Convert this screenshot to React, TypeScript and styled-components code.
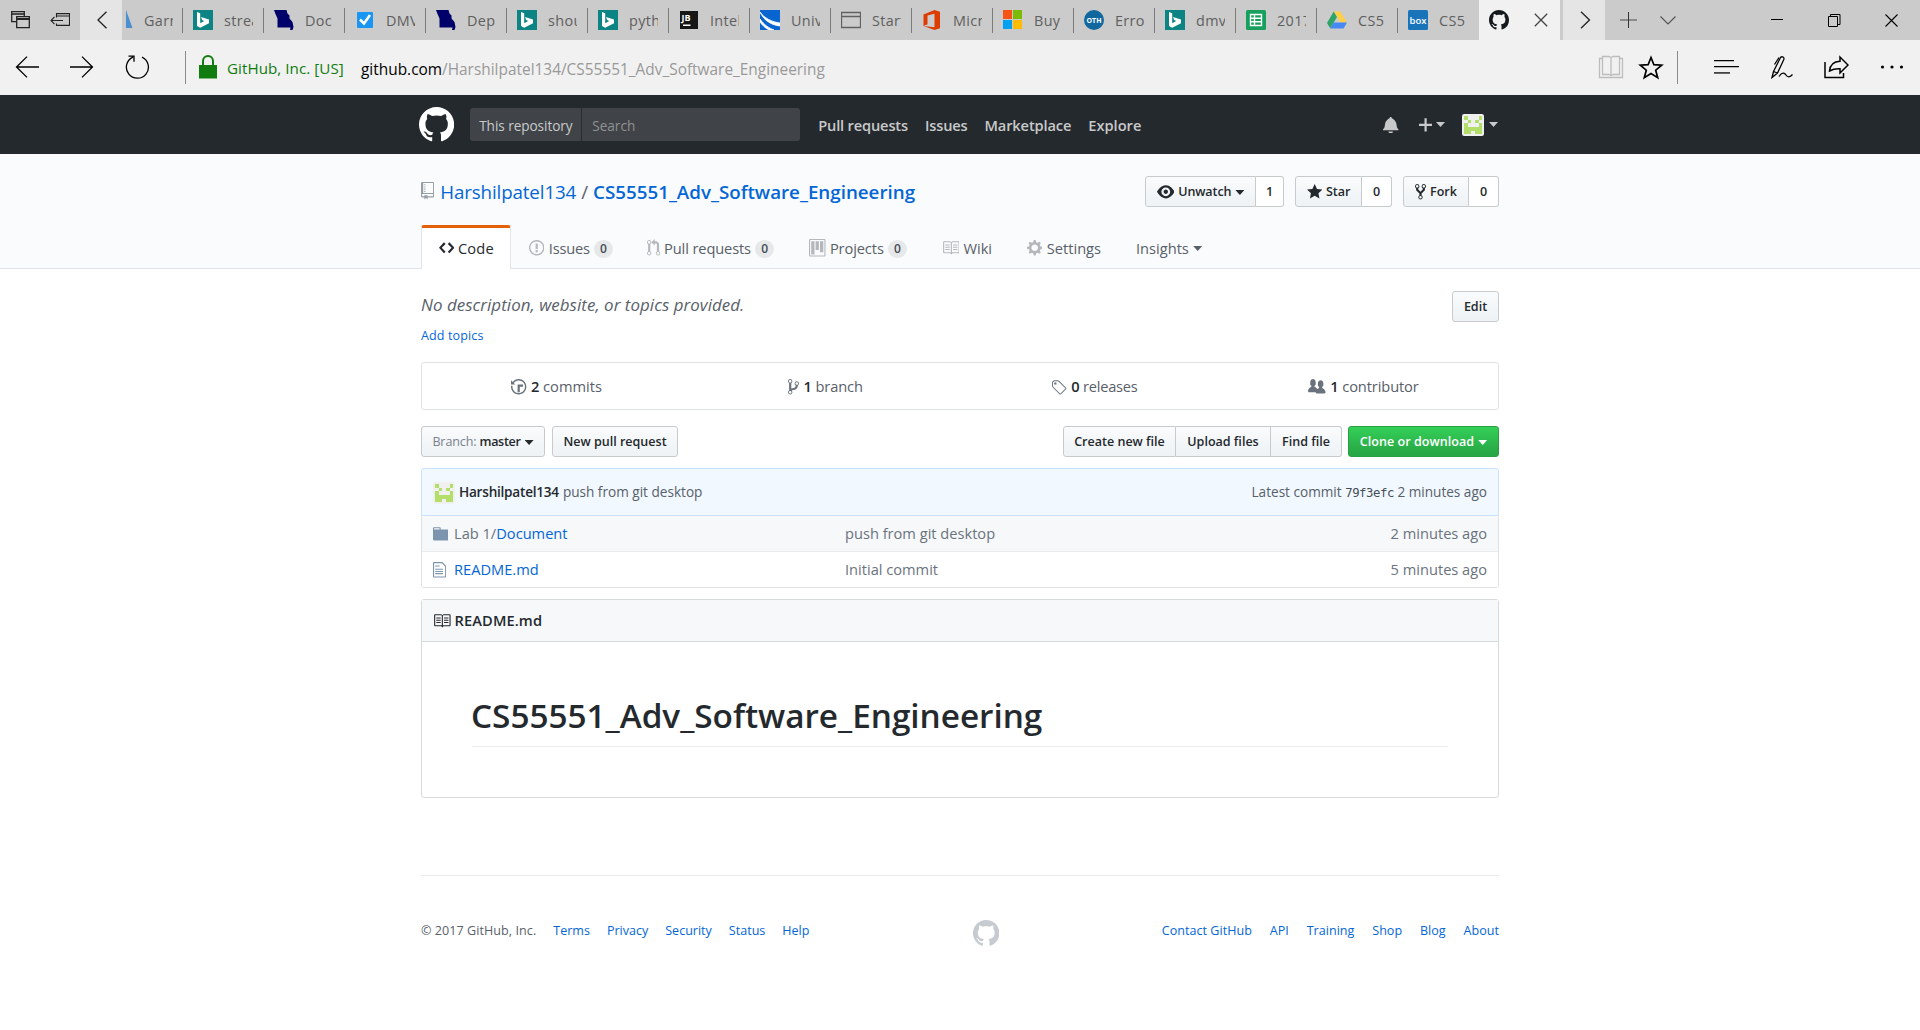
import React from "react";
import styled, { createGlobalStyle, css } from "styled-components";

const Global = createGlobalStyle`
  * { box-sizing: border-box; }
  html, body { margin: 0; background: #fff; }
  body {
    font-family: "Open Sans", "Noto Sans", sans-serif;
    color: #24292e;
    font-size: 14.63px;
    line-height: 1.5;
    overflow: hidden;
  }
  svg { display: block; flex: none; }
`;

/* ---------- Octicon paths: [viewBox width, path] ---------- */
const icons = {
  mark: [16, "M8 0C3.58 0 0 3.58 0 8c0 3.54 2.29 6.53 5.47 7.59.4.07.55-.17.55-.38 0-.19-.01-.82-.01-1.49-2.01.37-2.53-.49-2.69-.94-.09-.23-.48-.94-.82-1.13-.28-.15-.68-.52-.01-.53.63-.01 1.08.58 1.23.82.72 1.21 1.87.87 2.33.66.07-.52.28-.87.51-1.07-1.78-.2-3.64-.89-3.64-3.95 0-.87.31-1.59.82-2.15-.08-.2-.36-1.02.08-2.12 0 0 .67-.21 2.2.82.64-.18 1.32-.27 2-.27.68 0 1.36.09 2 .27 1.53-1.04 2.2-.82 2.2-.82.44 1.1.16 1.92.08 2.12.51.56.82 1.27.82 2.15 0 3.07-1.87 3.75-3.65 3.95.29.25.54.73.54 1.48 0 1.07-.01 1.93-.01 2.2 0 .21.15.46.55.38A8.013 8.013 0 0 0 16 8c0-4.42-3.58-8-8-8z"],
  repo: [12, "M4 9H3V8h1v1zm0-3H3v1h1V6zm0-2H3v1h1V4zm0-2H3v1h1V2zm8-1v12c0 .55-.45 1-1 1H6v2l-1.5-1.5L3 16v-2H1c-.55 0-1-.45-1-1V1c0-.55.45-1 1-1h10c.55 0 1 .45 1 1zm-1 10H1v2h2v-1h3v1h5v-2zm0-10H2v9h9V1z"],
  code: [14, "M9.5 3L8 4.5 11.5 8 8 11.5 9.5 13 14 8 9.5 3zm-5 0L0 8l4.5 5L6 11.5 2.5 8 6 4.5 4.5 3z"],
  issue: [14, "M7 2.3c3.14 0 5.7 2.56 5.7 5.7s-2.56 5.7-5.7 5.7A5.71 5.71 0 0 1 1.3 8c0-3.14 2.56-5.7 5.7-5.7zM7 1C3.14 1 0 4.14 0 8s3.14 7 7 7 7-3.14 7-7-3.14-7-7-7zm1 3H6v5h2V4zm0 6H6v2h2v-2z"],
  pull: [12, "M11 11.28V5c-.03-.78-.34-1.47-.94-2.06C9.46 2.35 8.78 2.03 8 2H7V0L4 3l3 3V4h1c.27.02.48.11.69.31.21.2.3.42.31.69v6.28A1.993 1.993 0 0 0 10 15a1.993 1.993 0 0 0 1-3.72zm-1 2.92c-.66 0-1.2-.55-1.2-1.2 0-.65.55-1.2 1.2-1.2.65 0 1.2.55 1.2 1.2 0 .65-.55 1.2-1.2 1.2zM4 3c0-1.11-.89-2-2-2a1.993 1.993 0 0 0-1 3.72v6.56A1.993 1.993 0 0 0 2 15a1.993 1.993 0 0 0 1-3.72V4.72c.59-.34 1-.98 1-1.72zm-.8 10c0 .66-.55 1.2-1.2 1.2-.65 0-1.2-.55-1.2-1.2 0-.65.55-1.2 1.2-1.2.65 0 1.2.55 1.2 1.2zM2 4.2C1.34 4.2.8 3.65.8 3c0-.65.55-1.2 1.2-1.2.65 0 1.2.55 1.2 1.2 0 .65-.55 1.2-1.2 1.2z"],
  project: [15, "M10 12h3V2h-3v10zm-4-2h3V2H6v8zm-4 4h3V2H2v12zm-1 1h13V1H1v14zM14 0H1a1 1 0 0 0-1 1v14a1 1 0 0 0 1 1h13a1 1 0 0 0 1-1V1a1 1 0 0 0-1-1z"],
  book: [16, "M3 5h4v1H3V5zm0 3h4V7H3v1zm0 2h4V9H3v1zm11-5h-4v1h4V5zm0 2h-4v1h4V7zm0 2h-4v1h4V9zm2-6v9c0 .55-.45 1-1 1H9.5l-1 1-1-1H2c-.55 0-1-.45-1-1V3c0-.55.45-1 1-1h5.5l1 1 1-1H15c.55 0 1 .45 1 1zm-8 .5L7.5 3H2v9h6V3.5zm7-.5H9.5l-.5.5V12h6V3z"],
  gear: [14, "M14 8.77v-1.6l-1.94-.64-.45-1.09.88-1.84-1.13-1.13-1.81.91-1.09-.45-.69-1.92h-1.6l-.63 1.94-1.11.45-1.84-.88-1.13 1.13.91 1.81-.45 1.09L0 7.23v1.59l1.94.64.45 1.09-.88 1.84 1.13 1.13 1.81-.91 1.09.45.69 1.92h1.59l.63-1.94 1.11-.45 1.84.88 1.13-1.13-.92-1.81.47-1.09L14 8.75v.02zM7 11c-1.66 0-3-1.34-3-3s1.34-3 3-3 3 1.34 3 3-1.34 3-3 3z"],
  eye: [16, "M8.06 2C3 2 0 8 0 8s3 6 8.06 6C13 14 16 8 16 8s-3-6-7.94-6zM8 12c-2.2 0-4-1.78-4-4 0-2.2 1.8-4 4-4 2.22 0 4 1.8 4 4 0 2.22-1.78 4-4 4zm2-4c0 1.11-.89 2-2 2-1.11 0-2-.89-2-2 0-1.11.89-2 2-2 1.11 0 2 .89 2 2z"],
  star: [14, "M14 6l-4.9-.64L7 1 4.9 5.36 0 6l3.6 3.26L2.67 14 7 11.67 11.33 14l-.93-4.74L14 6z"],
  fork: [10, "M8 1a1.993 1.993 0 0 0-1 3.72V6L5 8 3 6V4.72A1.993 1.993 0 0 0 2 1a1.993 1.993 0 0 0-1 3.72V6.5l3 3v1.78A1.993 1.993 0 0 0 5 15a1.993 1.993 0 0 0 1-3.72V9.5l3-3V4.72A1.993 1.993 0 0 0 8 1zM2 4.2C1.34 4.2.8 3.65.8 3c0-.65.55-1.2 1.2-1.2.65 0 1.2.55 1.2 1.2 0 .65-.55 1.2-1.2 1.2zm3 10c-.66 0-1.2-.55-1.2-1.2 0-.65.55-1.2 1.2-1.2.65 0 1.2.55 1.2 1.2 0 .65-.55 1.2-1.2 1.2zm3-10c-.66 0-1.2-.55-1.2-1.2 0-.65.55-1.2 1.2-1.2.65 0 1.2.55 1.2 1.2 0 .65-.55 1.2-1.2 1.2z"],
  history: [14, "M8 13H6V6h5v2H8v5zM7 1C4.81 1 2.87 2.02 1.59 3.59L0 2v4h4L2.5 4.5C3.55 3.17 5.17 2.3 7 2.3c3.14 0 5.7 2.56 5.7 5.7s-2.56 5.7-5.7 5.7A5.71 5.71 0 0 1 1.3 8c0-.34.03-.67.09-1H.08C.03 7.33 0 7.66 0 8c0 3.86 3.14 7 7 7s7-3.14 7-7-3.14-7-7-7z"],
  branch: [10, "M10 5c0-1.11-.89-2-2-2a1.993 1.993 0 0 0-1 3.72v.3c-.02.52-.23.98-.63 1.38-.4.4-.86.61-1.38.63-.83.02-1.48.16-2 .45V4.72a1.993 1.993 0 0 0-1-3.72C.88 1 0 1.89 0 3a2 2 0 0 0 1 1.72v6.56c-.59.35-1 .99-1 1.72 0 1.11.89 2 2 2 1.11 0 2-.89 2-2 0-.53-.2-1-.53-1.36.09-.06.48-.41.59-.47.25-.11.56-.17.94-.17 1.05-.05 1.95-.45 2.75-1.25S8.95 7.77 9 6.73h-.02C9.59 6.37 10 5.73 10 5zM2 1.8c.66 0 1.2.55 1.2 1.2 0 .65-.55 1.2-1.2 1.2C1.35 4.2.8 3.65.8 3c0-.65.55-1.2 1.2-1.2zm0 12.41c-.66 0-1.2-.55-1.2-1.2 0-.65.55-1.2 1.2-1.2.65 0 1.2.55 1.2 1.2 0 .65-.55 1.2-1.2 1.2zm6-8c-.66 0-1.2-.55-1.2-1.2 0-.65.55-1.2 1.2-1.2.65 0 1.2.55 1.2 1.2 0 .65-.55 1.2-1.2 1.2z"],
  tag: [14, "M6.73 2.73C6.26 2.26 5.62 2 4.96 2H2.5C1.13 2 0 3.13 0 4.5v2.47c0 .66.27 1.3.73 1.77l6.06 6.06c.39.39 1.02.39 1.41 0l4.59-4.59a.996.996 0 0 0 0-1.41L6.73 2.73zM1.38 8.09c-.31-.3-.47-.7-.47-1.13V4.5c0-.88.72-1.59 1.59-1.59h2.47c.42 0 .83.16 1.13.47l6.14 6.13-4.73 4.73-6.13-6.15zM2.01 4h2v2H2V4h.01z"],
  people: [16, "M16 12.999c0 .439-.45 1-1 1H7.995c-.539 0-.994-.447-.995-.999H1c-.54 0-1-.561-1-1 0-2.634 3-4 3-4s.229-.409 0-1c-.841-.621-1.058-.59-1-3 .058-2.419 1.367-3 2.5-3s2.442.58 2.5 3c.058 2.41-.159 2.379-1 3-.229.59 0 1 0 1s1.549.711 2.42 2.088C9.196 9.369 10 8.999 10 8.999s.229-.409 0-1c-.841-.62-1.058-.59-1-2.999.058-2.419 1.367-3 2.5-3s2.437.581 2.495 3c.059 2.41-.158 2.38-1 3-.229.59 0 1 0 1s3.005 1.366 3.005 4"],
  folder: [14, "M13 4H7V3c0-.66-.31-1-1-1H1c-.55 0-1 .45-1 1v10c0 .55.45 1 1 1h12c.55 0 1-.45 1-1V5c0-.55-.45-1-1-1zM6 4H1V3h5v1z"],
  file: [12, "M6 5H2V4h4v1zM2 8h7V7H2v1zm0 2h7V9H2v1zm0 2h7v-1H2v1zm10-7.5V14c0 .55-.45 1-1 1H1c-.55 0-1-.45-1-1V2c0-.55.45-1 1-1h7.5L12 4.5zM11 5L8 2H1v12h10V5z"],
  bell: [14, "M14 12v1H0v-1l.73-.58c.77-.77.81-2.55 1.19-4.42C2.69 3.23 6 2 6 2c0-.55.45-1 1-1s1 .45 1 1c0 0 3.39 1.23 4.16 5 .38 1.88.42 3.66 1.19 4.42l.66.58H14zm-7 4c1.11 0 2-.89 2-2H5c0 1.11.89 2 2 2z"],
  plus: [12, "M12 9H7v5H5V9H0V7h5V2h2v5h5z"],
} as const;

function Octicon({ name, size = 17.6 }: { name: keyof typeof icons; size?: number }) {
  const [w, d] = icons[name];
  return (
    <svg width={(w * size) / 16} height={size} viewBox={`0 0 ${w} 16`} fill="currentColor">
      <path d={d} fillRule={name === "project" ? "evenodd" : "nonzero"} />
    </svg>
  );
}

const Caret = styled.span`
  display: inline-block;
  flex: none;
  width: 9px;
  height: 5px;
  background: currentColor;
  clip-path: polygon(0 0, 100% 0, 50% 100%);
`;

const Txt = styled.span<{ $ls?: number; $w?: number }>`
  white-space: pre;
  letter-spacing: ${(p) => p.$ls ?? 0}px;
  ${(p) => p.$w && css`width: ${p.$w}px; flex: none;`}
`;

/* ---------- Browser tab strip ---------- */
const TabStrip = styled.div`
  display: flex;
  height: 40px;
  background: #cbcbcb;
  align-items: stretch;
`;
const StripTools = styled.div`
  width: 80px;
  display: flex;
  align-items: center;
  padding-left: 11px;
  gap: 20px;
`;
const StripArrow = styled.div`
  width: 42px;
  background: #e5e5e5;
  display: flex;
  align-items: center;
  justify-content: center;
  padding-left: 2px;
`;
const BrowserTab = styled.div<{ $partial?: boolean }>`
  width: ${(p) => (p.$partial ? 60 : 81)}px;
  display: flex;
  align-items: center;
  overflow: hidden;
`;
const TabRule = styled.i`
  width: 1px;
  height: 25px;
  margin-top: 1px;
  background: #7c7c7c;
  margin-right: 10px;
`;
const TabLabel = styled.span`
  margin-left: 11px;
  width: 29px;
  overflow: hidden;
  white-space: nowrap;
  font-size: 14.4px;
  letter-spacing: 0.35px;
  color: #5f5f5f;
  padding-top: 1px;
`;
const ActiveTab = styled.div`
  width: 81px;
  margin-left: 1px;
  margin-right: 3px;
  background: #f1f1f1;
  display: flex;
  align-items: center;
  padding: 0 12px 0 10px;
  justify-content: space-between;
  color: #15191d;
`;
const NewTabTools = styled.div`
  flex: 1;
  display: flex;
  align-items: center;
  padding-left: 15px;
  gap: 23px;
`;
const WindowControls = styled.div`
  display: flex;
  align-items: center;
  padding-right: 22px;
  gap: 44px;
`;

const Fav = ({ children }: { children: React.ReactNode }) => (
  <svg width="20" height="20" viewBox="0 0 20 20">{children}</svg>
);
const Bing = () => (
  <Fav>
    <rect width="20" height="20" fill="#0c8484" />
    <path d="M4 2l3.200 1.200v10l4-2.100-2-1-1.200-3.200L16 9.600v3.600L7.200 17.800 4 16z" fill="#fff" />
  </Fav>
);
const Missouri = () => (
  <Fav>
    <path d="M0 0h12.500l1 3.500 2 2v3l3 3.500 1 5-1 3H16l.5-2.500h-13v-9l-2-4.500z" fill="#00006b" />
  </Fav>
);
const Check = () => (
  <Fav>
    <rect x="2" y="2" width="16" height="16" rx="1" fill="#1996f3" />
    <path d="M5 9.500l4 4L15 5" stroke="#fff" strokeWidth="2.600" fill="none" />
  </Fav>
);
const JetBrains = () => (
  <Fav>
    <rect x="1" y="1" width="18" height="18" fill="#161616" />
    <text x="2.500" y="10.500" fontSize="9" fontWeight="700" fill="#fff">JB</text>
    <rect x="4" y="14.500" width="7.500" height="1.500" fill="#fff" />
  </Fav>
);
const University = () => (
  <Fav>
    <rect width="20" height="20" fill="#0864cf" />
    <path d="M0 2C4 8 12 12 20 13v3C12 15 4 11 0 2zM0 9c4 6 9 9 14 11H9C5 18 2 15 0 12z" fill="#fff" stroke="#fff" strokeWidth=".8" />
  </Fav>
);
const Blank = () => (
  <Fav>
    <path d="M.5 2.500h19v15H.5zM.5 6.500h19" stroke="#616161" fill="none" strokeWidth="1.300" />
  </Fav>
);
const Office = () => (
  <Fav>
    <path d="M1.500 4.500L12.500 0 18 1.700v16.500L12.500 20l-11-4 11 1.200V3.700L5.500 5.400v8.800l-4 1.700z" fill="#dc3c00" />
  </Fav>
);
const Microsoft = () => (
  <Fav>
    <rect x="0" y="0" width="9" height="9" fill="#f65314" />
    <rect x="10" y="0" width="9" height="9" fill="#7cbb00" />
    <rect x="0" y="10" width="9" height="9" fill="#00a1f1" />
    <rect x="10" y="10" width="9" height="9" fill="#ffbb00" />
  </Fav>
);
const Oth = () => (
  <Fav>
    <circle cx="10" cy="10" r="10" fill="#11689f" />
    <text x="10" y="12.600" fontSize="7" fontWeight="700" fill="#fff" textAnchor="middle">OTH</text>
  </Fav>
);
const Sheets = () => (
  <Fav>
    <rect width="20" height="20" rx="1.500" fill="#17a05d" />
    <path d="M4.500 4.500h11v11h-11zM4.500 8.200h11M4.500 11.800h11M8.500 4.500v11" stroke="#fff" strokeWidth="1.400" fill="none" />
  </Fav>
);
const Drive = () => (
  <Fav>
    <path d="M6.700 1.500h6.600L20 12.500h-6.500z" fill="#ffcf48" />
    <path d="M6.700 1.500L0 13l3.300 5.500L10 7z" fill="#2fa469" />
    <path d="M6.700 12.500H20l-3.400 6H3.300z" fill="#4688f4" />
  </Fav>
);
const Box = () => (
  <Fav>
    <rect width="20" height="20" rx="1.500" fill="#1a74ba" />
    <text x="10" y="13.500" fontSize="9.500" fontWeight="600" fill="#fff" textAnchor="middle">box</text>
  </Fav>
);

const browserTabs: [React.ComponentType, string][] = [
  [Bing, "stream"], [Missouri, "Doc"], [Check, "DMV"], [Missouri, "Dep"],
  [Bing, "shoul"], [Bing, "pytho"], [JetBrains, "Intelli"], [University, "Unive"],
  [Blank, "Start"], [Office, "Micro"], [Microsoft, "Buy"], [Oth, "Erro"],
  [Bing, "dmv"], [Sheets, "2017"], [Drive, "CS5"], [Box, "CS5"],
];

/* ---------- Address bar ---------- */
const AddressBar = styled.div`
  height: 55px;
  background: #f1f1f1;
  display: flex;
  align-items: center;
  padding: 0 15px 1px 15px;
  font-size: 15.2px;
`;
const BarGroup = styled.div<{ $gap: number; $ml?: number }>`
  display: flex;
  align-items: center;
  gap: ${(p) => p.$gap}px;
  margin-left: ${(p) => p.$ml ?? 0}px;
`;
const BarRule = styled.i<{ $ml: number; $mr: number }>`
  width: 1px;
  height: 33px;
  background: #8b8b8b;
  margin: 0 ${(p) => p.$mr}px 0 ${(p) => p.$ml}px;
`;
const SecureName = styled(Txt)`
  color: #107c10;
  margin: 2px 18px 0 10px;
`;
const Url = styled(Txt)`
  flex: 1;
  color: #999;
  font-size: 15.4px;
  margin-top: 5px;
  b { font-weight: 400; color: #000; }
`;

/* ---------- GitHub header ---------- */
const GhHeader = styled.header`
  height: 59px;
  background: #24292e;
  color: #c8c9cb;
`;
const Container = styled.div`
  width: 1078px;
  margin: 0 auto;
`;
const HeaderRow = styled(Container)`
  height: 59px;
  display: flex;
  align-items: center;
  padding-right: 1px;
`;
const LogoLink = styled.div`
  color: #fff;
  margin: 0 16px 0 -2px;
`;
const SearchBox = styled.div`
  display: flex;
  align-items: center;
  width: 330px;
  height: 33px;
  background: #404448;
  border-radius: 3px;
  font-size: 13.6px;
  line-height: 33px;
  margin-right: 18px;
`;
const Scope = styled(Txt)`
  width: 112px;
  height: 33px;
  padding: 1px 0 0 9px;
  border-right: 1px solid #282d32;
  color: #c8cacb;
`;
const Placeholder = styled(Txt)`
  color: #8e9193;
  padding: 1px 0 0 10px;
`;
const HeaderNav = styled.nav`
  flex: 1;
  display: flex;
  gap: 17px;
  font-weight: 600;
  padding-top: 2px;
  color: #c8c9ca;
`;
const UserNav = styled.div`
  display: flex;
  align-items: center;
`;
const Drop = styled.div<{ $gap: number; $ml: number }>`
  display: flex;
  align-items: center;
  gap: ${(p) => p.$gap}px;
  margin-left: ${(p) => p.$ml}px;
`;

function Identicon({ size }: { size: number }) {
  const rows = ["X...X", ".X.X.", "X...X", "XXXXX", "XX.XX"];
  return (
    <svg width={size} height={size} viewBox="0 0 60 60" shapeRendering="crispEdges">
      <rect width="60" height="60" rx="6" fill="#f0f0f0" shapeRendering="auto" />
      {rows.flatMap((r, y) =>
        r.split("").map((c, x) => c === "X" && (
          <rect key={`${x}${y}`} x={5 + x * 10} y={5 + y * 10} width="10" height="10" fill="#b4de6a" />
        ))
      )}
    </svg>
  );
}

/* ---------- Repository header ---------- */
const RepoHead = styled.div`
  height: 115px;
  background: #fafbfc;
  border-bottom: 1px solid #e1e4e8;
`;
const RepoInner = styled(Container)`
  height: 115px;
  display: flex;
  flex-direction: column;
`;
const RepoTitleRow = styled.div`
  height: 71px;
  display: flex;
  align-items: center;
  padding-top: 4px;
  gap: 11px;
`;
const RepoTitle = styled.h1`
  flex: 1;
  margin: 0;
  padding-top: 2px;
  display: flex;
  align-items: center;
  font-weight: 400;
  font-size: 18.75px;
  color: #586069;
  a { color: #0366d6; }
  strong { font-weight: 600; color: #0366d6; }
`;
const RepoIcon = styled.span`
  color: #959da5;
  margin: 0 6px 3px 0;
`;
const Slash = styled.span`
  margin: 0 5px;
`;

const buttonLook = css`
  height: 31px;
  border: 1px solid #c8cbcd;
  background: linear-gradient(#fafbfc, #eff3f6 90%);
  color: #24292e;
  font-weight: 600;
  font-size: 12.54px;
  display: flex;
  align-items: center;
  white-space: pre;
  padding-top: 2px;
  > svg { margin-top: -2px; }
`;
const Button = styled.div<{ $w: number; $primary?: boolean; $ls?: number }>`
  ${buttonLook}
  width: ${(p) => p.$w}px;
  justify-content: center;
  gap: 4px;
  border-radius: 3px;
  letter-spacing: ${(p) => p.$ls ?? 0}px;
  ${(p) => p.$primary && css`
    color: #fff;
    border-color: #289f41;
    background: linear-gradient(#34d058, #28a745 90%);
  `}
`;
const ButtonGroup = styled.div`
  display: flex;
  > * { border-radius: 0; }
  > * + * { border-left: 0; }
  > :first-child { border-radius: 3px 0 0 3px; }
  > :last-child { border-radius: 0 3px 3px 0; }
`;
const Count = styled(Button)`
  background: #fff;
`;
const Muted = styled.span`
  font-weight: 400;
  color: #7a828a;
  letter-spacing: -0.1px;
`;

const RepoTabs = styled.nav`
  height: 44px;
  display: flex;
`;
const RepoTab = styled.div<{ $active?: boolean; $w: number }>`
  width: ${(p) => p.$w}px;
  display: flex;
  align-items: center;
  gap: 4.4px;
  padding: 3px 0 0 18px;
  color: #586069;
  white-space: pre;
  > svg { color: #b4b8bc; margin-top: -1px; }
  ${(p) => p.$active && css`
    width: 90px;
    padding: 0 0 0 17px;
    gap: 3.5px;
    background: #fff;
    border: 1px solid #e1e4e8;
    border-top: 3px solid #e36209;
    border-bottom: 0;
    border-radius: 3px 3px 0 0;
    color: #24292e;
    > svg { color: #24292e; }
  `}
`;
const Counter = styled.span`
  width: 18.5px;
  height: 18px;
  border-radius: 10px;
  background: #e7e8ea;
  color: #444d56;
  font-size: 12px;
  font-weight: 600;
  line-height: 18.5px;
  text-align: center;
`;

/* ---------- Repository body ---------- */
const About = styled.div`
  display: flex;
  justify-content: space-between;
  height: 93px;
  padding-top: 22px;
`;
const AboutText = styled.div`
  display: flex;
  flex-direction: column;
`;
const Description = styled(Txt)`
  font-style: italic;
  font-size: 16.9px;
  line-height: 26px;
  padding-top: 1px;
  color: #586069;
`;
const AddTopics = styled.a`
  color: #0366d6;
  font-size: 12.54px;
  letter-spacing: 0.12px;
  line-height: 20px;
  margin-top: 8px;
`;
const Stats = styled.div`
  display: grid;
  grid-template-columns: repeat(4, 1fr);
  height: 48px;
  border: 1px solid #dfe2e5;
  border-radius: 3px;
`;
const Stat = styled.div`
  display: flex;
  align-items: center;
  justify-content: center;
  gap: 4.4px;
  padding-top: 2px;
  color: #586069;
  white-space: pre;
  strong { color: #24292e; font-weight: 600; }
  > svg { color: #6a737d; }
`;
const FileNav = styled.div`
  display: flex;
  justify-content: space-between;
  margin-top: 16px;
`;
const Cluster = styled.div<{ $gap: number }>`
  display: flex;
  gap: ${(p) => p.$gap}px;
`;
const CommitTease = styled.div`
  margin-top: 11px;
  height: 48px;
  border: 1px solid #c8e1ff;
  border-radius: 3px 3px 0 0;
  background: #f1f8ff;
  display: flex;
  align-items: center;
  padding: 1px 11px 0 11px;
  font-size: 13.6px;
  color: #586069;
  strong { color: #24292e; font-weight: 600; }
`;
const CommitMsg = styled.div`
  flex: 1;
  display: flex;
  gap: 4px;
  padding-left: 4px;
`;
const Sha = styled.code`
  font-family: "DejaVu Sans Mono", "Liberation Mono", monospace;
  font-size: 12.3px;
  letter-spacing: -0.45px;
  color: #444d56;
`;
const Files = styled.div`
  border: 1px solid #dfe2e5;
  border-top: 0;
  border-radius: 0 0 3px 3px;
`;
const FileRow = styled.div<{ $shade?: boolean }>`
  display: grid;
  grid-template-columns: 21px 391px 1fr auto;
  align-items: center;
  height: ${(p) => (p.$shade ? 35 : 36)}px;
  padding: 1px 11px 0 11px;
  background: ${(p) => (p.$shade ? "#f6f8fa" : "#fff")};
  color: #6a737d;
  a { color: #0366d6; }
  > svg { color: #7d94ae; }
  & + & { border-top: 1px solid #eaecef; }
`;
const Readme = styled.section`
  margin-top: 11px;
  height: 199px;
  border: 1px solid #d8dbde;
  border-radius: 3px;
`;
const ReadmeHead = styled.div`
  height: 42px;
  background: #f6f8fa;
  border-bottom: 1px solid #d8dbde;
  display: flex;
  align-items: center;
  gap: 4px;
  padding: 0 0 0 11px;
  font-weight: 600;
`;
const ReadmeBody = styled.div`
  padding: 49px 50px;
`;
const Heading = styled.h1`
  margin: 0;
  height: 56px;
  font-size: 33.35px;
  font-weight: 600;
  line-height: 49px;
  letter-spacing: -0.03px;
  text-indent: -1px;
  border-bottom: 1px solid #eaecef;
`;

/* ---------- Footer ---------- */
const Footer = styled.footer`
  margin-top: 77px;
  border-top: 1px solid #eaecef;
  padding-top: 44px;
  display: flex;
  font-size: 12.54px;
  line-height: 20px;
  color: #586069;
`;
const LinkSet = styled.div<{ $w?: number }>`
  display: flex;
  gap: ${(p) => (p.$w ? 17 : 17.8)}px;
  padding-top: 1px;
  width: ${(p) => (p.$w ? p.$w + "px" : "auto")};
  margin-left: ${(p) => (p.$w ? 0 : "auto")};
  a { color: #0366d6; letter-spacing: ${(p) => (p.$w ? 0 : 0.04)}px; }
`;
const FooterMark = styled.span`
  color: #c6cbd1;
  margin-left: 1px;
`;

const line = { fill: "none", stroke: "#222", strokeWidth: 1.3 };

function Browser() {
  return (
    <>
      <TabStrip>
        <StripTools>
          <svg width="19" height="18" viewBox="0 0 19 18" {...line}>
            <path d="M.7.700h12.600v10H.7zM.7 3h12.600" />
            <path d="M5.700 5.700h12.600v11H5.700z" fill="#cbcbcb" /><path d="M5.700 8h12.600" strokeWidth="2" />
          </svg>
          <svg width="20" height="16" viewBox="0 0 20 16" {...line} strokeWidth="1.100">
            <path d="M6.500 5.500V1.600h13v11.800h-13v-2M6.500 4h13M1 8.500h12M4.500 4.800L1 8.500l3.500 3.700" />
          </svg>
        </StripTools>
        <StripArrow>
          <svg width="12" height="18" viewBox="0 0 12 18" {...line}><path d="M10.500.7L2 9l8.500 8.300" /></svg>
        </StripArrow>
        <BrowserTab $partial>
          <svg width="11" height="20" viewBox="0 0 11 20"><path d="M4 0v18h6.500z" fill="#4a8fcf" /></svg>
          <TabLabel>Garmin</TabLabel>
        </BrowserTab>
        {browserTabs.map(([Icon, label], i) => (
          <BrowserTab key={i}>
            <TabRule />
            <Icon />
            <TabLabel>{label}</TabLabel>
          </BrowserTab>
        ))}
        <ActiveTab>
          <Octicon name="mark" size={20} />
          <svg width="14" height="14" viewBox="0 0 14 14" {...line} stroke="#444"><path d="M.8.8l12.400 12.400M13.200.8L.8 13.200" /></svg>
        </ActiveTab>
        <StripArrow>
          <svg width="12" height="18" viewBox="0 0 12 18" {...line}><path d="M2 .7L10.500 9 2 17.300" /></svg>
        </StripArrow>
        <NewTabTools>
          <svg width="17" height="16" viewBox="0 0 17 16" fill="none">
            <path d="M0 8h17" stroke="#7a7a7a" strokeWidth="1.600" /><path d="M8.500 0v16" stroke="#333" />
          </svg>
          <svg width="16" height="9" viewBox="0 0 16 9" fill="none" stroke="#555" strokeWidth="1.200"><path d="M.5.500L8 8 15.500.5" /></svg>
        </NewTabTools>
        <WindowControls>
          <svg width="13" height="12" viewBox="0 0 13 12"><path d="M0 5h12v1H0z" /></svg>
          <svg width="13" height="13" viewBox="0 0 13 13" fill="none" stroke="#000"><path d="M.5 2.500h9v10h-9zM2.500 2V.5h9.500v10H10" /></svg>
          <svg width="13" height="13" viewBox="0 0 13 13" fill="none" stroke="#000" strokeWidth="1.100"><path d="M.5.500l12 12M12.500.5l-12 12" /></svg>
        </WindowControls>
      </TabStrip>
      <AddressBar>
        <BarGroup $gap={31}>
          <svg width="24" height="22" viewBox="0 0 24 22" {...line} stroke="#000"><path d="M24 11H1.500M12 .6L1.500 11 12 21.400" /></svg>
          <svg width="24" height="22" viewBox="0 0 24 22" {...line} stroke="#000"><path d="M0 11h22.500M12 .6L22.500 11 12 21.400" /></svg>
          <svg width="25" height="24" viewBox="0 0 25 24" {...line} stroke="#000">
            <path d="M17 2.200A11 11 0 1 1 8 2.100M3.500 1.200h5.500v5.500" />
          </svg>
        </BarGroup>
        <BarRule $ml={35} $mr={13} />
        <svg width="18" height="24" viewBox="0 0 18 24">
          <rect y="10" width="18" height="13.500" fill="#107c10" />
          <path d="M4 11V6a5 5 0 0 1 10 0v5" fill="none" stroke="#107c10" strokeWidth="2" />
        </svg>
        <SecureName $ls={0.04} $w={116}>GitHub, Inc. [US]</SecureName>
        <Url $ls={0.01}><b>github.com</b>/Harshilpatel134/CS55551_Adv_Software_Engineering</Url>
        <svg width="26" height="24" viewBox="0 0 26 24" fill="none" stroke="#bdbdbd" strokeWidth="1.300">
          <path d="M4.500 1.500h6.500l2 1 2-1h6.500v18H15l-2 1-2-1H4.500zM13 2.500v18M4 3.500H1.500v19h23v-19H22" />
        </svg>
        <BarGroup $gap={0} $ml={14}>
          <svg width="26" height="25" viewBox="0 0 26 25" {...line} stroke="#000" strokeWidth="1.700">
            <path d="M13 2.500l2.900 7.200 7.800.5-6 5 2 7.500-6.700-4.200-6.700 4.200 2-7.500-6-5 7.800-.5z" />
          </svg>
        </BarGroup>
        <BarRule $ml={13} $mr={36} />
        <BarGroup $gap={30.6}>
          <svg width="26" height="16" viewBox="0 0 26 16" fill="#000">
            <path d="M0 1h20v1.200H0zM0 7h25v1.300H0z" /><path d="M0 13h16v1.800H0z" fill="#444" />
          </svg>
          <svg width="23" height="24" viewBox="0 0 23 24" {...line} stroke="#000">
            <path d="M1 22.500l1.500-6L9 3.500C10 .7 13.800 1.500 12.800 4.500L6.500 18zM2.500 16.500L6.500 18M3.500 9.500L8 2.500M8 21.500c3-4.500 5.500-4 7-1.500s4 2.500 6.500-.5" />
          </svg>
          <svg width="25" height="24" viewBox="0 0 25 24" {...line} stroke="#000">
            <path d="M1 7v15.500h18.500V18M5.500 16C6 10 9.500 6.500 16 6.200V2l8 8-8 8v-4.200c-4.500-.2-7.500.5-10.500 2.200z" strokeWidth="1.500" />
          </svg>
          <svg width="25" height="4" viewBox="0 0 25 4"><circle cx="2.500" cy="2" r="1.600" /><circle cx="12" cy="2" r="1.600" /><circle cx="21.500" cy="2" r="1.600" /></svg>
        </BarGroup>
      </AddressBar>
    </>
  );
}

export default function App() {
  return (
    <>
      <Global />
      <Browser />
      <GhHeader>
        <HeaderRow>
          <LogoLink><Octicon name="mark" size={35.2} /></LogoLink>
          <SearchBox>
            <Scope $ls={-0.06}>This repository</Scope>
            <Placeholder>Search</Placeholder>
          </SearchBox>
          <HeaderNav>
            <Txt $ls={-0.16}>Pull requests</Txt>
            <Txt $ls={-0.17}>Issues</Txt>
            <Txt $ls={-0.13}>Marketplace</Txt>
            <Txt>Explore</Txt>
          </HeaderNav>
          <UserNav>
            <Octicon name="bell" />
            <Drop $gap={4} $ml={20}><Octicon name="plus" /><Caret /></Drop>
            <Drop $gap={5} $ml={17}><Identicon size={22} /><Caret /></Drop>
          </UserNav>
        </HeaderRow>
      </GhHeader>

      <RepoHead>
        <RepoInner>
          <RepoTitleRow>
            <RepoTitle>
              <RepoIcon><Octicon name="repo" /></RepoIcon>
              <a><Txt $ls={-0.12}>Harshilpatel134</Txt></a>
              <Slash>/</Slash>
              <strong><Txt>CS55551_Adv_Software_Engineering</Txt></strong>
            </RepoTitle>
            <ButtonGroup>
              <Button $w={111} $ls={-0.1}><Octicon name="eye" />Unwatch<Caret /></Button>
              <Count $w={28}>1</Count>
            </ButtonGroup>
            <ButtonGroup>
              <Button $w={67}><Octicon name="star" />Star</Button>
              <Count $w={30}>0</Count>
            </ButtonGroup>
            <ButtonGroup>
              <Button $w={66}><Octicon name="fork" />Fork</Button>
              <Count $w={30}>0</Count>
            </ButtonGroup>
          </RepoTitleRow>
          <RepoTabs>
            <RepoTab $w={90} $active><Octicon name="code" /><Txt $ls={0.2}>Code</Txt></RepoTab>
            <RepoTab $w={117.5}><Octicon name="issue" /><Txt $ls={-0.2}>Issues</Txt><Counter>0</Counter></RepoTab>
            <RepoTab $w={162.5}><Octicon name="pull" /><Txt $ls={-0.12}>Pull requests</Txt><Counter>0</Counter></RepoTab>
            <RepoTab $w={132.5}><Octicon name="project" /><Txt $ls={-0.1}>Projects</Txt><Counter>0</Counter></RepoTab>
            <RepoTab $w={85.5}><Octicon name="book" /><Txt>Wiki</Txt></RepoTab>
            <RepoTab $w={109}><Octicon name="gear" /><Txt>Settings</Txt></RepoTab>
            <RepoTab $w={90}><Txt>Insights</Txt><Caret /></RepoTab>
          </RepoTabs>
        </RepoInner>
      </RepoHead>

      <Container>
        <About>
          <AboutText>
            <Description $ls={0.06}>No description, website, or topics provided.</Description>
            <AddTopics>Add topics</AddTopics>
          </AboutText>
          <Button $w={47}>Edit</Button>
        </About>

        <Stats>
          <Stat><Octicon name="history" /><Txt><strong>2</strong> commits</Txt></Stat>
          <Stat><Octicon name="branch" /><Txt $ls={-0.1}><strong>1</strong> branch</Txt></Stat>
          <Stat><Octicon name="tag" /><Txt $ls={-0.25}><strong>0</strong> releases</Txt></Stat>
          <Stat><Octicon name="people" /><Txt $ls={-0.1}><strong>1</strong> contributor</Txt></Stat>
        </Stats>

        <FileNav>
          <Cluster $gap={7}>
            <Button $w={124} $ls={-0.3}><span><Muted>Branch:</Muted> master</span><Caret /></Button>
            <Button $w={126}>New pull request</Button>
          </Cluster>
          <Cluster $gap={6}>
            <ButtonGroup>
              <Button $w={113}>Create new file</Button>
              <Button $w={95}>Upload files</Button>
              <Button $w={71}>Find file</Button>
            </ButtonGroup>
            <Button $w={151} $primary $ls={0.04}>Clone or download<Caret /></Button>
          </Cluster>
        </FileNav>

        <CommitTease>
          <Identicon size={22} />
          <CommitMsg>
            <strong><Txt $ls={-0.24}>Harshilpatel134</Txt></strong>
            <Txt>push from git desktop</Txt>
          </CommitMsg>
          <Txt>Latest commit <Sha>79f3efc</Sha> 2 minutes ago</Txt>
        </CommitTease>
        <Files>
          <FileRow $shade>
            <Octicon name="folder" />
            <Txt>Lab 1/<a>Document</a></Txt>
            <Txt>push from git desktop</Txt>
            <Txt>2 minutes ago</Txt>
          </FileRow>
          <FileRow>
            <Octicon name="file" />
            <a>README.md</a>
            <Txt>Initial commit</Txt>
            <Txt>5 minutes ago</Txt>
          </FileRow>
        </Files>

        <Readme>
          <ReadmeHead><Octicon name="book" /><Txt $ls={0.1}>README.md</Txt></ReadmeHead>
          <ReadmeBody><Heading>CS55551_Adv_Software_Engineering</Heading></ReadmeBody>
        </Readme>

        <Footer>
          <LinkSet $w={551}>
            <Txt $ls={0.07}>© 2017 GitHub, Inc.</Txt>
            <a>Terms</a><a>Privacy</a><a>Security</a><a>Status</a><a>Help</a>
          </LinkSet>
          <FooterMark><Octicon name="mark" size={26.4} /></FooterMark>
          <LinkSet>
            <a>Contact GitHub</a><a>API</a><a>Training</a><a>Shop</a><a>Blog</a><a>About</a>
          </LinkSet>
        </Footer>
      </Container>
    </>
  );
}
